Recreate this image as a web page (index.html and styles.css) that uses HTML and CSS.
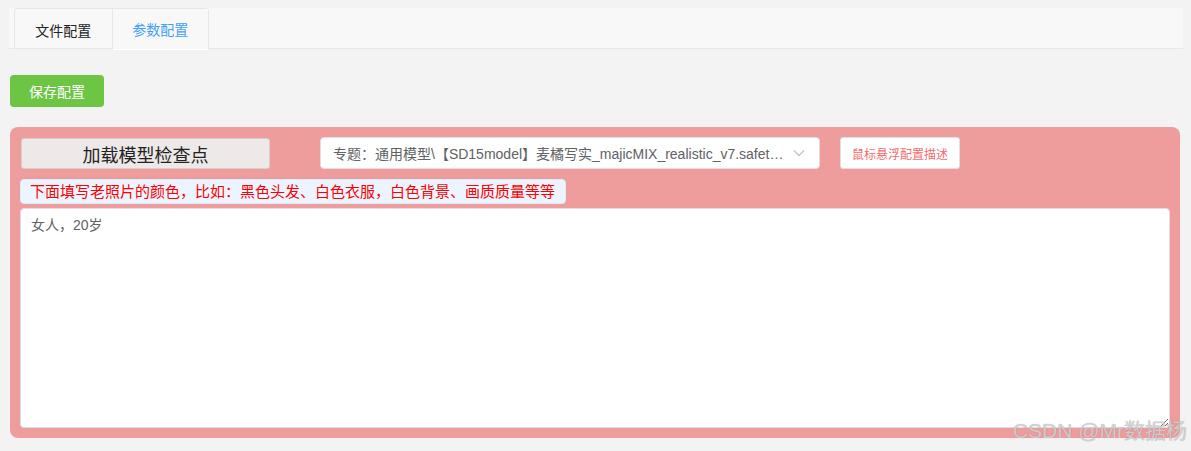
FILE: index.html
```html
<!DOCTYPE html>
<html lang="zh">
<head>
<meta charset="utf-8">
<title>参数配置</title>
<link rel="stylesheet" href="styles.css">
</head>
<body>
<div class="page">
  <div class="tabs">
    <div class="tab-list">
      <div class="tab">文件配置</div>
      <div class="tab active">参数配置</div>
    </div>
  </div>
  <div class="content">
    <button class="btn-save">保存配置</button>
    <div class="panel">
      <div class="row">
        <button class="btn-load">加载模型检查点</button>
        <div class="select">
          <span class="select-text">专题：通用模型\【SD15model】麦橘写实_majicMIX_realistic_v7.safet…</span>
          <svg class="chev" width="12" height="8" viewBox="0 0 12 8"><path d="M1 1.5 L6 6.5 L11 1.5" fill="none" stroke="#c0c4cc" stroke-width="1.3"/></svg>
        </div>
        <button class="btn-desc">鼠标悬浮配置描述</button>
      </div>
      <div class="hint">下面填写老照片的颜色，比如：黑色头发、白色衣服，白色背景、画质质量等等</div>
      <textarea class="prompt">女人，20岁</textarea>
    </div>
  </div>
  <div class="watermark">CSDN @Mr数据杨</div>
</div>
</body>
</html>
```
FILE: styles.css
```css
* { box-sizing: border-box; }
html, body { margin: 0; padding: 0; }
body {
  background: #f3f3f3;
  font-family: "Liberation Sans", "Noto Sans CJK SC", sans-serif;
  width: 1191px;
  height: 451px;
  overflow: hidden;
}
.page {
  position: relative;
  padding: 8px 8px 0 9px;
  height: 451px;
}
.tabs {
  height: 41px;
  background: #f8f8f8;
  border-bottom: 1px solid #e4e7ed;
  padding-left: 5px;
}
.tab-list {
  display: flex;
  height: 41px;
  border: 1px solid #e4e7ed;
  border-bottom: none;
  border-radius: 4px 4px 0 0;
  width: 195px;
}
.tab {
  width: 97px;
  height: 41px;
  display: flex;
  align-items: center;
  justify-content: center;
  font-size: 14px;
  color: #222;
}
.tab.active {
  border-left: 1px solid #e4e7ed;
  color: #409eff;
  background: #f8f8f8;
  border-bottom: 1px solid #fff;
  height: 41px;
}
.content {
  padding-top: 26px;
}
.btn-save {
  display: block;
  margin-left: 1px;
  width: 94px;
  height: 32px;
  border: none;
  border-radius: 4px;
  background: #6cc644;
  color: #fff;
  font-family: inherit;
  font-size: 14px;
  padding: 0;
}
.panel {
  margin-top: 20px;
  margin-left: 1px;
  width: 1170px;
  height: 311px;
  background: #ee9c9c;
  border-radius: 8px;
  padding: 10px 10px;
  display: flex;
  flex-direction: column;
}
.row {
  display: flex;
  align-items: flex-start;
  height: 32px;
}
.btn-load {
  margin-left: 1px;
  margin-top: 1px;
  width: 249px;
  height: 31px;
  background: #ede9e8;
  border: 1px solid #d6cfcd;
  border-radius: 3px;
  font-family: inherit;
  font-size: 18px;
  color: #222;
  padding: 0;
}
.select {
  margin-left: 50px;
  width: 500px;
  height: 32px;
  background: #fff;
  border: 1px solid #dcdfe6;
  border-radius: 4px;
  display: flex;
  align-items: center;
  padding: 0 14px 0 12px;
}
.select-text {
  flex: 1;
  font-size: 14px;
  color: #606266;
  white-space: nowrap;
  overflow: hidden;
}
.chev { margin-left: 8px; }
.btn-desc {
  margin-left: 20px;
  width: 120px;
  height: 32px;
  background: #fff;
  border: 1px solid #dcdfe6;
  border-radius: 3px;
  font-family: inherit;
  font-size: 12px;
  color: #f56c6c;
  padding: 0;
}
.hint {
  margin-top: 10px;
  width: 546px;
  height: 25px;
  background: #ecf5ff;
  border: 1px solid #d9ecff;
  border-radius: 4px;
  color: #ff0000;
  font-size: 15px;
  line-height: 23px;
  padding-left: 9px;
  white-space: nowrap;
}
.prompt {
  margin-top: 4px;
  width: 1150px;
  height: 221px;
  border: 1px solid #dcdfe6;
  border-radius: 4px;
  background: #fff;
  font-family: inherit;
  font-size: 14px;
  color: #606266;
  padding: 6px 10px;
  line-height: 20px;
  resize: both;
  outline: none;
}
.watermark {
  position: absolute;
  right: 4px;
  bottom: 7px;
  font-size: 21px;
  color: rgba(215, 215, 215, 0.85);
  text-shadow: 0 0 1px rgba(120,120,120,0.6);
  pointer-events: none;
}
```
